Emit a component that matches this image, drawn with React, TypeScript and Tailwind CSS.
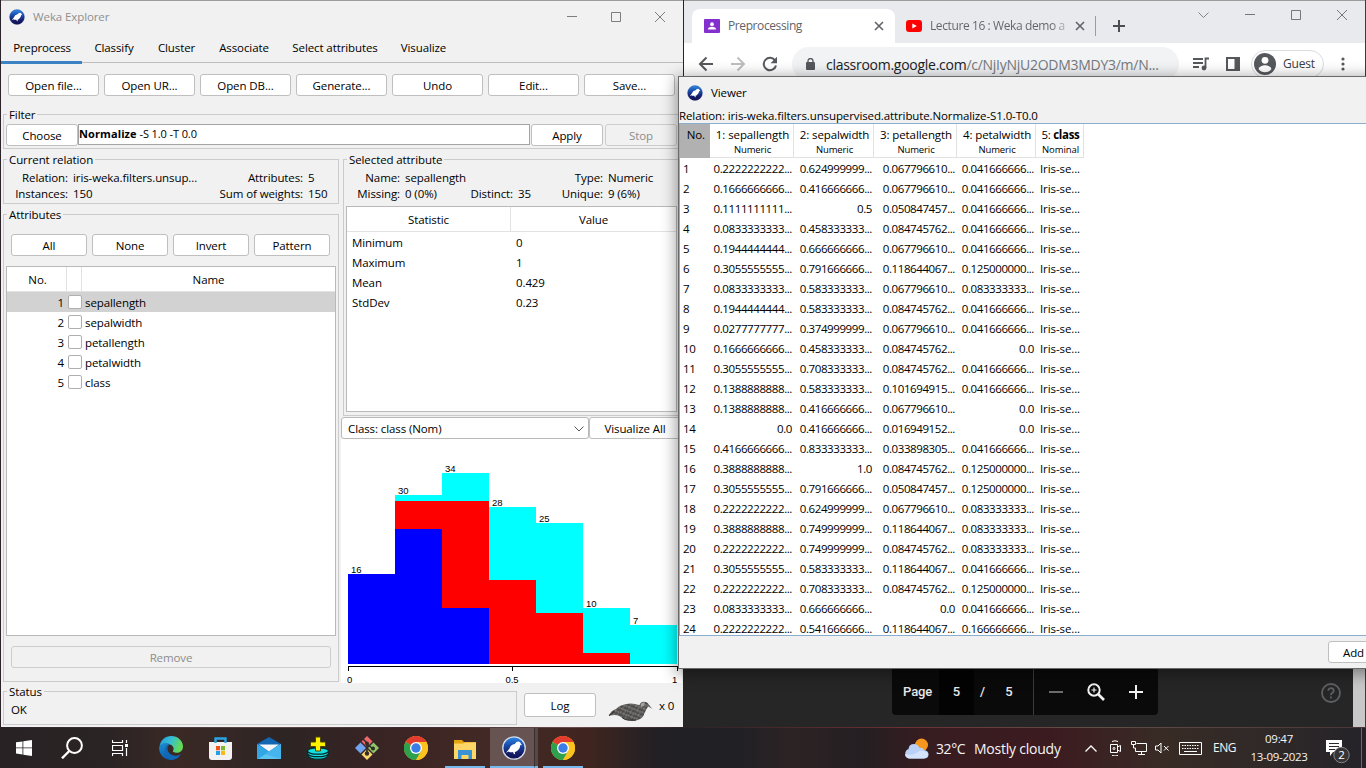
import React from "react";

const histogram = [
  { total: "16", x: 7, cyan: 135, red: 135, blue: 135 },
  { total: "30", x: 54, cyan: 56, red: 62, blue: 90 },
  { total: "34", x: 101, cyan: 34, red: 62, blue: 169 },
  { total: "28", x: 148, cyan: 68, red: 141, blue: 225 },
  { total: "25", x: 195, cyan: 84, red: 174, blue: 225 },
  { total: "10", x: 242, cyan: 169, red: 214, blue: 225 },
  { total: "7", x: 289, cyan: 186, red: 225, blue: 225 },
];

const rows: string[][] = [
  ["0.2222222222...", "0.624999999...", "0.067796610...", "0.041666666..."],
  ["0.1666666666...", "0.416666666...", "0.067796610...", "0.041666666..."],
  ["0.1111111111...", "0.5", "0.050847457...", "0.041666666..."],
  ["0.0833333333...", "0.458333333...", "0.084745762...", "0.041666666..."],
  ["0.1944444444...", "0.666666666...", "0.067796610...", "0.041666666..."],
  ["0.3055555555...", "0.791666666...", "0.118644067...", "0.125000000..."],
  ["0.0833333333...", "0.583333333...", "0.067796610...", "0.083333333..."],
  ["0.1944444444...", "0.583333333...", "0.084745762...", "0.041666666..."],
  ["0.0277777777...", "0.374999999...", "0.067796610...", "0.041666666..."],
  ["0.1666666666...", "0.458333333...", "0.084745762...", "0.0"],
  ["0.3055555555...", "0.708333333...", "0.084745762...", "0.041666666..."],
  ["0.1388888888...", "0.583333333...", "0.101694915...", "0.041666666..."],
  ["0.1388888888...", "0.416666666...", "0.067796610...", "0.0"],
  ["0.0", "0.416666666...", "0.016949152...", "0.0"],
  ["0.4166666666...", "0.833333333...", "0.033898305...", "0.041666666..."],
  ["0.3888888888...", "1.0", "0.084745762...", "0.125000000..."],
  ["0.3055555555...", "0.791666666...", "0.050847457...", "0.125000000..."],
  ["0.2222222222...", "0.624999999...", "0.067796610...", "0.083333333..."],
  ["0.3888888888...", "0.749999999...", "0.118644067...", "0.083333333..."],
  ["0.2222222222...", "0.749999999...", "0.084745762...", "0.083333333..."],
  ["0.3055555555...", "0.583333333...", "0.118644067...", "0.041666666..."],
  ["0.2222222222...", "0.708333333...", "0.084745762...", "0.125000000..."],
  ["0.0833333333...", "0.666666666...", "0.0", "0.041666666..."],
  ["0.2222222222...", "0.541666666...", "0.118644067...", "0.166666666..."],
];

const viewerGrid = "grid grid-cols-[30px_84px_80px_83px_79px_48px]";

function Button({ children, className = "", disabled = false }: { children: React.ReactNode; className?: string; disabled?: boolean }) {
  return (
    <button
      className={`flex h-[22px] shrink-0 items-center justify-center whitespace-nowrap rounded-[3px] border pt-px ${
        disabled ? "border-[#cdcdcd] bg-[#f1f1f1] text-[#8c8c8c]" : "border-[#bfbfbf] bg-white text-black"
      } ${className}`}
    >
      {children}
    </button>
  );
}

function Group({ title, className = "", children }: { title: string; className?: string; children: React.ReactNode }) {
  return (
    <section className={`relative border border-[#cbcbcb] ${className}`}>
      <h2 className="absolute left-[3px] top-[-8px] bg-[#f1f1f1] px-[2px] leading-4">{title}</h2>
      {children}
    </section>
  );
}

function WekaIcon({ size, ring }: { size: number; ring?: boolean }) {
  return (
    <svg width={size} height={size} viewBox="0 0 24 24" className="shrink-0">
      <defs>
        <linearGradient id="wekaBlue" x1="0" y1="0" x2="0" y2="1">
          <stop offset="0" stopColor="#2f8be8" />
          <stop offset="0.35" stopColor="#1b4fae" />
          <stop offset="0.75" stopColor="#141a66" />
          <stop offset="1" stopColor="#10104e" />
        </linearGradient>
      </defs>
      <circle cx="12" cy="12" r="11.2" fill="url(#wekaBlue)" stroke={ring ? "#d5dbea" : "#28438c"} strokeWidth={ring ? 1.3 : 0.5} />
      <path d="M4 16.800L7.500 12.400Q8.500 8.800 12.800 7.900 14.300 5.400 16.800 5.600 18.400 5.900 18.900 7.600L20 9.300 18.200 9.100Q18.300 13 14.600 15.200L12.700 16.200 13.200 18.200 11.800 18 11 16Q8.500 16.700 6.700 15.400z" fill="#fff" />
    </svg>
  );
}

function WindowControls({ color, wide, className = "" }: { color: string; wide?: boolean; className?: string }) {
  return (
    <svg width={wide ? 102 : 98} height="12" viewBox={wide ? "0 0 102 12" : "0 0 98 12"} fill="none" stroke={color} className={className}>
      {wide ? <path d="M0 5.500H10M46.500 1.500h9v9h-9zM92 1l10 10M102 1L92 11" /> : <path d="M0 5.500H10M44.500 1.500h9v9h-9zM88 1l10 10M98 1L88 11" />}
    </svg>
  );
}

function ChromeTabs() {
  return (
    <div className="flex h-[42px] items-end bg-[#e8eaed]">
      <div className="ml-2 flex h-[34px] w-[203px] items-center rounded-t-lg bg-white pl-3">
        <svg width="16" height="14" viewBox="0 0 16 14">
          <rect width="16" height="14" rx="1" fill="#8430ce" />
          <circle cx="8" cy="5.200" r="1.900" fill="#fff" />
          <path d="M4 10.500q0-2.700 4-2.700t4 2.700z" fill="#fff" />
        </svg>
        <span className="ml-2 w-[145px] text-[12px] tracking-[-0.4px] text-[#5f6368]">Preprocessing</span>
        <svg width="10" height="10" viewBox="0 0 10 10" stroke="#5f6368" strokeWidth="1.600" className="ml-px">
          <path d="M1 1l8 8M9 1L1 9" />
        </svg>
      </div>
      <div className="flex h-[34px] items-center pl-[11px]">
        <svg width="16" height="12" viewBox="0 0 16 12">
          <rect width="16" height="12" rx="3" fill="#f00" />
          <path d="M6.300 3.400v5.200L10.800 6z" fill="#fff" />
        </svg>
        <span className="ml-2 w-[138px] whitespace-nowrap bg-linear-to-r from-[#5f6368] from-88% to-[#5f636840] bg-clip-text text-[12px] tracking-[-0.4px] text-transparent">
          Lecture 16 : Weka demo a
        </span>
        <svg width="10" height="10" viewBox="0 0 10 10" stroke="#5f6368" strokeWidth="1.600" className="ml-[7px]">
          <path d="M1 1l8 8M9 1L1 9" />
        </svg>
        <div className="ml-[10px] h-5 w-px bg-[#9a9da1]" />
        <svg width="12" height="12" viewBox="0 0 12 12" stroke="#4a4d51" strokeWidth="2" className="ml-[17px]">
          <path d="M6 0v12M0 6h12" />
        </svg>
      </div>
      <div className="ml-auto mr-[18px] flex h-[42px] items-start gap-[36px] pt-[8px]">
        <svg width="11" height="12" viewBox="0 0 11 12" fill="none" stroke="#808285">
          <path d="M.5 3.500l5 5 5-5" />
        </svg>
        <WindowControls color="#76777a" wide />
      </div>
    </div>
  );
}

function ChromeToolbar() {
  return (
    <div className="flex h-[42px] items-center bg-white pl-[14px]">
      <svg width="16" height="16" viewBox="0 0 16 16" fill="none" stroke="#55585c" strokeWidth="2">
        <path d="M15 8H2M8.500 1.500L2 8l6.500 6.500" />
      </svg>
      <svg width="16" height="16" viewBox="0 0 16 16" fill="none" stroke="#bcbec0" strokeWidth="2" className="ml-4">
        <path d="M1 8h13M7.500 1.500L14 8l-6.500 6.500" />
      </svg>
      <svg width="16" height="16" viewBox="0 0 16 16" className="ml-4">
        <path d="M13.200 4.700A6.200 6.200 0 1 0 14 9.500" fill="none" stroke="#55585c" strokeWidth="2" />
        <path d="M15 .8v6.400H8.600z" fill="#55585c" />
      </svg>
      <div className="ml-[14px] flex h-[34px] w-[387px] items-center rounded-full bg-[#f1f3f4] pl-[14px]">
        <svg width="9" height="12" viewBox="0 0 9 12">
          <rect y="4" width="9" height="8" rx="1" fill="#55585c" />
          <path d="M2 5V3a2.500 2.500 0 0 1 5 0v2" fill="none" stroke="#55585c" strokeWidth="1.300" />
        </svg>
        <span className="ml-[11px] whitespace-nowrap text-[14px] tracking-[-0.27px] text-[#202124]">
          classroom.google.com<span className="text-[#75797e]">/c/NjIyNjU2ODM3MDY3/m/N...</span>
        </span>
      </div>
      <svg width="17" height="14" viewBox="0 0 17 14" className="ml-[14px]">
        <path d="M0 2h10M0 6h10M0 10h6" stroke="#55585c" strokeWidth="1.800" />
        <path d="M12.500 11V1.500H16" fill="none" stroke="#55585c" strokeWidth="1.800" />
        <circle cx="11" cy="11" r="2.400" fill="#55585c" />
      </svg>
      <svg width="14" height="14" viewBox="0 0 14 14" className="ml-4">
        <path d="M1 1h12v12H1z" fill="none" stroke="#55585c" strokeWidth="2" />
        <path d="M8.500 0H14v14H8.500z" fill="#55585c" />
      </svg>
      <div className="ml-[11px] flex h-[28px] w-[73px] items-center rounded-full border border-[#dadce0] pl-[2px]">
        <svg width="22" height="22" viewBox="0 0 22 22">
          <circle cx="11" cy="11" r="11" fill="#55585c" />
          <circle cx="11" cy="7.300" r="3.400" fill="#fff" />
          <path d="M4.500 16q1.700-3.700 6.500-3.700t6.500 3.700q-2.500 3.200-6.500 3.200T4.500 16z" fill="#fff" />
        </svg>
        <span className="ml-[7px] text-[12px] tracking-[-0.2px] text-[#3c4043]">Guest</span>
      </div>
      <svg width="4" height="14" viewBox="0 0 4 14" fill="#55585c" className="ml-[17px]">
        <circle cx="2" cy="2" r="1.600" />
        <circle cx="2" cy="7" r="1.600" />
        <circle cx="2" cy="12" r="1.600" />
      </svg>
    </div>
  );
}

function ChromeWindow() {
  return (
    <div className="absolute left-[684px] top-0 flex h-[727px] w-[681px] flex-col border-t border-[#9c9c9c] bg-[#262626]">
      <ChromeTabs />
      <ChromeToolbar />
      <div className="mt-auto flex h-[60px]">
        <div className="flex flex-1 items-start pl-[208px] pt-[2px]">
          <div className="flex h-[46px] w-[266px] items-center rounded-b bg-[#0a0a0a] font-[Roboto,sans-serif] text-[13px] font-medium text-[#e8e8e8]">
            <span className="w-[47px] pl-[11px]">Page</span>
            <span className="flex h-full w-[35px] items-center justify-center bg-[#030303]">5</span>
            <span className="w-[17px] text-center">/</span>
            <span className="w-[36px] text-center">5</span>
            <span className="ml-[6px] h-full w-px bg-[#3a3a3a]" />
            <span className="ml-[15px] h-[2px] w-[14px] bg-[#6c6c6c]" />
            <svg width="18" height="18" viewBox="0 0 18 18" fill="none" stroke="#f1f1f1" strokeWidth="2" className="ml-[24px]">
              <circle cx="7" cy="7" r="5.700" />
              <path d="M11 11l6 6" strokeWidth="2.600" />
              <path d="M7 4.500v5M4.500 7h5" strokeWidth="1.200" />
            </svg>
            <svg width="14" height="14" viewBox="0 0 14 14" stroke="#f1f1f1" strokeWidth="2" className="ml-[24px]">
              <path d="M7 0v14M0 7h14" />
            </svg>
          </div>
          <svg width="20" height="20" viewBox="0 0 20 20" fill="none" stroke="#5d5f62" strokeWidth="1.800" className="ml-auto mr-[12px] mt-[14px]">
            <circle cx="10" cy="10" r="9" />
            <path d="M7.300 7.800q0-2.600 2.700-2.600t2.700 2.500q0 1.300-1.500 2.200T10 12.200M10 13.500v2" />
          </svg>
        </div>
        <div className="w-3 bg-[#c8c8c8]" />
      </div>
    </div>
  );
}

function Info({ label, value, labelWidth }: { label: string; value: string; labelWidth: string }) {
  return (
    <div className="flex whitespace-nowrap">
      <span className={`${labelWidth} text-right`}>{label}</span>
      <span className="ml-[5px]">{value}</span>
    </div>
  );
}

function AttributesPanel() {
  return (
    <Group title="Attributes" className="mt-[10px] h-[468px] w-[336px] px-[2px] pt-[19px]">
      <div className="flex gap-[5px] pl-[5px]">
        {["All", "None", "Invert", "Pattern"].map((name) => (
          <Button key={name} className="w-[76px]">{name}</Button>
        ))}
      </div>
      <div className="mt-[10px] flex h-[370px] flex-col border border-[#b9b9b9] bg-white">
        <div className="flex h-[25px] border-b border-[#e2e2e2] text-center leading-[25px]">
          <span className="w-[60px] border-r border-[#e2e2e2] pl-[2px]">No.</span>
          <span className="w-[15px] border-r border-[#e2e2e2]" />
          <span className="flex-1">Name</span>
        </div>
        {["sepallength", "sepalwidth", "petallength", "petalwidth", "class"].map((name, i) => (
          <div key={name} className={`flex h-5 items-center ${i === 0 ? "bg-[#d2d2d2]" : ""}`}>
            <span className="w-[57px] pt-[2px] text-right">{i + 1}</span>
            <span className="ml-[4px] size-[14px] rounded-[2px] border border-[#b0b0b0] bg-white" />
            <span className="ml-[3px] pt-[2px]">{name}</span>
          </div>
        ))}
      </div>
      <Button disabled className="ml-[5px] mt-[10px] w-[320px]">Remove</Button>
    </Group>
  );
}

function Histogram() {
  return (
    <svg width="341" height="244" viewBox="0 0 341 244" className="bg-white" shapeRendering="crispEdges">
      {histogram.map((bar) => (
        <g key={bar.x}>
          <rect x={bar.x} y={bar.cyan} width="47" height={225 - bar.cyan} fill="#0ff" />
          <rect x={bar.x} y={bar.red} width="47" height={225 - bar.red} fill="#f00" />
          <rect x={bar.x} y={bar.blue} width="47" height={225 - bar.blue} fill="#00f" />
          <text x={bar.x + 3} y={bar.cyan - 1} fontSize="9.500" fontFamily="Liberation Sans, sans-serif">{bar.total}</text>
        </g>
      ))}
      <path d="M7.500 232v-4.500h329v4.500M171.500 227.500v4.500" fill="none" stroke="#000" />
      <g fontSize="9.500" fontFamily="Liberation Sans, sans-serif">
        <text x="6" y="244">0</text>
        <text x="164.500" y="244">0.5</text>
        <text x="331" y="244">1</text>
      </g>
    </svg>
  );
}

function SelectedAttribute() {
  return (
    <Group title="Selected attribute" className="ml-[2px] h-[257px] w-[337px] px-[2px] pt-[10px]">
      <div className="flex h-[36px] leading-4">
        <div>
          <Info label="Name:" value="sepallength" labelWidth="w-[54px]" />
          <Info label="Missing:" value="0 (0%)" labelWidth="w-[54px]" />
        </div>
        <div className="pt-4">
          <Info label="Distinct:" value="35" labelWidth="w-[47px]" />
        </div>
        <div className="ml-[24px]">
          <Info label="Type:" value="Numeric" labelWidth="w-[48px]" />
          <Info label="Unique:" value="9 (6%)" labelWidth="w-[48px]" />
        </div>
      </div>
      <div className="h-[206px] border border-[#b9b9b9] bg-white">
        <div className="flex h-[25px] border-b border-[#e2e2e2] text-center leading-[25px]">
          <span className="w-[164px] border-r border-[#e2e2e2]">Statistic</span>
          <span className="flex-1">Value</span>
        </div>
        {[["Minimum", "0"], ["Maximum", "1"], ["Mean", "0.429"], ["StdDev", "0.23"]].map(([name, value]) => (
          <div key={name} className="flex h-5 items-center pl-[5px] pt-[2px]">
            <span className="w-[164px]">{name}</span>
            <span>{value}</span>
          </div>
        ))}
      </div>
    </Group>
  );
}

function WekaBird() {
  return (
    <svg width="45" height="21" viewBox="0 0 45 21">
      <defs>
        <pattern id="feathers" width="7" height="5" patternUnits="userSpaceOnUse" patternTransform="rotate(-14)">
          <rect width="7" height="5" fill="#62605e" />
          <path d="M0 1h2M4 4h2M2 2h2" stroke="#353332" />
          <path d="M4 1h2M0 3h1M2 4h1" stroke="#8f8c89" />
        </pattern>
      </defs>
      <path d="M1 14.500Q3 9.500 8 8q4-4.500 12-5.300 6-.7 11.500 1.600Q32 .8 36 .8q3.500 0 4.500 2.500l3.800 4.500-4.200-2.300q-2.300 3.500-3.600 6.700-1.500 5.500-7.500 7-12 2-15.500-3-3.500-2.200-7-2.200z" fill="url(#feathers)" />
      <path d="M32.500 3.500Q34 1 37 1.500l-1 3.500-3 1z" fill="#a5a29f" />
      <path d="M1 14.500q3-1.500 5-4M14 16q3 4 14 3" fill="none" stroke="#343231" strokeWidth="1.200" />
    </svg>
  );
}

function WekaWindow() {
  return (
    <div className="absolute left-px top-0 flex h-[727px] w-[682px] flex-col overflow-hidden border-t border-[#9c9c9c] bg-[#f1f1f1]">
      <header className="flex h-[31px] shrink-0 items-center pl-[8px]">
        <WekaIcon size={16} />
        <h1 className="ml-[8px] text-[#8f8f8f]">Weka Explorer</h1>
        <WindowControls color="#7d7d7d" className="ml-auto mr-[18px]" />
      </header>
      <nav className="flex h-8 shrink-0 text-center leading-[31px]">
        <span className="w-[81px] border-b-[3px] border-[#3c83c5] pl-px tracking-[-0.2px]">Preprocess</span>
        {[["Classify", "w-[64px]"], ["Cluster", "w-[61px]"], ["Associate", "w-[74px]"], ["Select attributes", "w-[108px]"], ["Visualize", "w-[69px]"]].map(([name, width]) => (
          <span key={name} className={`mb-px whitespace-nowrap border-b border-[#bdbdbd] ${width}`}>{name}</span>
        ))}
        <span className="mb-px flex-1 border-b border-[#bdbdbd]" />
      </nav>
      <div className="mt-[10px] flex shrink-0 gap-[5px] pl-[7px]">
        {["Open file...", "Open UR...", "Open DB...", "Generate...", "Undo", "Edit...", "Save..."].map((name) => (
          <Button key={name} className="w-[91px]">{name}</Button>
        ))}
      </div>
      <Group title="Filter" className="ml-[2px] mt-[18px] h-[35px] w-[677px] shrink-0 pl-[2px] pt-[9px]">
        <div className="flex">
          <Button className="w-[72px]">Choose</Button>
          <div className="h-[21px] w-[452px] whitespace-nowrap border border-[#a3a3a3] bg-white text-[11px] leading-[18px] tracking-[-0.1px]">
            <b className="tracking-[0.1px]">Normalize</b> -S 1.0 -T 0.0
          </div>
          <Button className="ml-px w-[72px]">Apply</Button>
          <Button disabled className="ml-[2px] w-[72px]">Stop</Button>
        </div>
      </Group>
      <div className="mt-[10px] flex shrink-0 pl-[2px]">
        <div className="w-[338px]">
          <Group title="Current relation" className="flex h-[45px] w-[336px] pt-[10px] leading-4">
            <div>
              <Info label="Relation:" value="iris-weka.filters.unsup..." labelWidth="w-[64px]" />
              <Info label="Instances:" value="150" labelWidth="w-[64px]" />
            </div>
            <div className="ml-auto w-[125px]">
              <Info label="Attributes:" value="5" labelWidth="w-[90px]" />
              <Info label="Sum of weights:" value="150" labelWidth="w-[90px]" />
            </div>
          </Group>
          <AttributesPanel />
        </div>
        <div className="w-[341px]">
          <SelectedAttribute />
          <div className="mt-px flex">
            <div className="flex h-[22px] w-[248px] items-center justify-between rounded-[3px] border border-[#b9b9b9] bg-white pl-[6px] pr-[4px] pt-px">
              Class: class (Nom)
              <svg width="10" height="6" viewBox="0 0 10 6" fill="none" stroke="#555">
                <path d="M.5.500L5 5 9.500.500" />
              </svg>
            </div>
            <Button className="w-[92px]">Visualize All</Button>
          </div>
          <Histogram />
        </div>
      </div>
      <footer className="mb-[2px] mt-auto flex shrink-0 pl-[2px]">
        <Group title="Status" className="h-[34px] w-[514px] pl-[7px] pt-[10px] leading-4">OK</Group>
        <Button className="ml-[7px] mt-[2px] h-[24px] w-[72px]">Log</Button>
        <div className="ml-[12px] mt-[10px]"><WekaBird /></div>
        <span className="ml-[6px] mt-[6px]">x 0</span>
      </footer>
    </div>
  );
}

function ViewerWindow() {
  return (
    <div className="absolute left-[678px] top-[76px] flex h-[593px] w-[700px] flex-col border border-[#6a6a6a] bg-[#f1f1f1] shadow-[0_3px_14px_2px_rgba(0,0,0,0.38)]">
      <header className="flex h-[30px] items-center pl-[8px] pt-px">
        <WekaIcon size={16} />
        <h1 className="ml-[8px]">Viewer</h1>
      </header>
      <p className="h-[16px] whitespace-nowrap leading-[17px] tracking-[-0.11px]">Relation: iris-weka.filters.unsupervised.attribute.Normalize-S1.0-T0.0</p>
      <div className="h-[513px] overflow-hidden border-y border-l border-[#8aaed0] bg-white">
        <div className={`${viewerGrid} h-[34px] text-center leading-[15px]`}>
          <div className="bg-[#b1b1b1] pr-[5px] pt-[3px] text-right">No.</div>
          {["1: sepallength", "2: sepalwidth", "3: petallength", "4: petalwidth"].map((name) => (
            <div key={name} className="whitespace-nowrap border-b border-r border-[#e2e2e2] pl-[2px] pt-[3px]">
              {name}
              <div className="text-[9.500px] leading-[15px]">Numeric</div>
            </div>
          ))}
          <div className="border-b border-r border-[#e2e2e2] pl-[2px] pt-[3px] tracking-[-0.3px]">
            5: <b>class</b>
            <div className="text-[9.500px] leading-[15px] tracking-[-0.1px]">Nominal</div>
          </div>
        </div>
        <div className="pt-px">
          {rows.map((cells, i) => (
            <div key={i} className={`${viewerGrid} h-5 items-center text-right tracking-[-0.4px]`}>
              <span className="pl-[3px] text-left">{i + 1}</span>
              {cells.map((cell, c) => (
                <span key={c} className="pr-[2px]">{cell}</span>
              ))}
              <span className="whitespace-nowrap pr-[4px] tracking-[-0.1px]">Iris-se...</span>
            </div>
          ))}
        </div>
      </div>
      <Button className="ml-[649px] mt-[5px] w-[50px] justify-start pl-[14px]">Add</Button>
    </div>
  );
}

function ChromeLogo() {
  return (
    <svg width="24" height="24" viewBox="0 0 24 24">
      <circle cx="12" cy="12" r="12" fill="#fcc31e" />
      <path d="M12 12L1.600 6A12 12 0 0 1 22.400 6z" fill="#e33b2e" />
      <path d="M1.600 6A12 12 0 0 0 12 24l5.200-9z" fill="#2da14d" />
      <path d="M12 6h10.400A12 12 0 0 1 12 24l5.200-9z" fill="#fcc31e" />
      <circle cx="12" cy="12" r="6" fill="#fff" />
      <circle cx="12" cy="12" r="4.700" fill="#3a7de8" />
    </svg>
  );
}

function TaskSlot({ children, className = "w-[49px]" }: { children: React.ReactNode; className?: string }) {
  return <div className={`flex h-10 shrink-0 items-center justify-center ${className}`}>{children}</div>;
}

function Taskbar() {
  return (
    <div className="absolute left-0 top-[728px] flex h-10 w-[1366px] items-center bg-[linear-gradient(90deg,#282225_0%,#2b2424_8%,#3a2925_13%,#2d2424_21%,#3b2424_29%,#432a25_37%,#40251f_43%,#222025_48%,#202025_54%,#2d2325_58%,#241f22_63%,#371c20_68%,#3c1b20_77%,#382b25_85%,#2f2928_93%,#252329_100%)] text-[#f5f5f5]">
      <TaskSlot className="w-[48px]">
        <svg width="16" height="16" viewBox="0 0 16 16" fill="#fff">
          <path d="M0 2.300l6.500-.9v6.100H0zM7.300 1.300L16 0v7.500H7.300zM0 8.300h6.500v6.200L0 13.600zM7.300 8.300H16V16l-8.700-1.300z" />
        </svg>
      </TaskSlot>
      <TaskSlot className="w-[48px]">
        <svg width="22" height="22" viewBox="0 0 22 22" fill="none" stroke="#fff" strokeWidth="2">
          <circle cx="13.500" cy="8.500" r="7.400" />
          <path d="M8.300 14L1 21.300" strokeWidth="2.400" />
        </svg>
      </TaskSlot>
      <TaskSlot className="w-[48px]">
        <svg width="17" height="16" viewBox="0 0 17 16" fill="none" stroke="#fff">
          <path d="M.5 0v2.500h10V0M.5 16v-2.500h10V16M.5 5.500h10v5H.5zM14.500 0v3M14.500 8v8" strokeWidth="1.200" />
          <rect x="13" y="4" width="3" height="3" fill="#fff" stroke="none" />
        </svg>
      </TaskSlot>
      <TaskSlot className="w-[54px]">
        <svg width="24" height="24" viewBox="0 0 24 24">
          <defs>
            <linearGradient id="edgeTop" x1="0" y1="0" x2="1" y2="0.300">
              <stop offset="0" stopColor="#2795dc" />
              <stop offset="0.500" stopColor="#35bdd5" />
              <stop offset="1" stopColor="#65da55" />
            </linearGradient>
            <linearGradient id="edgeLow" x1="0" y1="0" x2="0.600" y2="1">
              <stop offset="0" stopColor="#1b8ed6" />
              <stop offset="1" stopColor="#0b55a5" />
            </linearGradient>
          </defs>
          <path d="M.5 10.500C1.500 4 6.500 0 12 0c7 0 12 5 12 10.500 0 4-3 6.300-6.300 6.300-3 0-4.300-1.200-3.700-2 1.200-1.500.8-5-3-6.300C7 7 2 8 .5 10.500z" fill="url(#edgeTop)" />
          <path d="M.2 11C2 7 7.500 6 11 8.300c-2.500 0-4.300 2.300-4.300 5 0 5 5 8.700 11 6.700l4-1.700C19.500 22 16 24 12 24 5 24-.5 18 .2 11z" fill="url(#edgeLow)" />
          <path d="M11 8.300C8 10 8 13.500 9.500 16c2.500 4 8 5 12.200 2.300C19.500 22 16 24 12 24 8 22 5.500 18.500 6 14c.3-3 2.500-5.500 5-5.700z" fill="#1268b8" />
        </svg>
      </TaskSlot>
      <TaskSlot className="w-[44px]">
        <svg width="23" height="23" viewBox="0 0 23 23">
          <path d="M0 5h23v15q0 3-3 3H3q-3 0-3-3z" fill="#f2f2f2" />
          <path d="M6.500 6V1.500h10V6" fill="none" stroke="#2aa5e4" strokeWidth="2.400" />
          <path d="M7 9h4v4.300H7z" fill="#f1511b" />
          <path d="M12 9h4v4.300h-4z" fill="#80b72b" />
          <path d="M7 14h4v4H7z" fill="#20a1e4" />
          <path d="M12 14h4v4h-4z" fill="#fab916" />
        </svg>
      </TaskSlot>
      <TaskSlot className="w-[54px]">
        <svg width="24" height="22" viewBox="0 0 24 22">
          <path d="M0 7L12 0l12 7v15H0z" fill="#1266b4" />
          <path d="M0 7l12 7.500L24 7v15H0z" fill="#31a5e6" />
          <path d="M2 7.500h20L12 14.500z" fill="#f4f8fa" />
          <path d="M24 7v15H1z" fill="#5bc4f3" />
          <path d="M24 7L12 14.500 8.500 17.300 24 22z" fill="#46b5ee" />
        </svg>
      </TaskSlot>
      <TaskSlot className="w-[44px]">
        <svg width="24" height="24" viewBox="0 0 24 24">
          <g fill="#16dfe2" stroke="#062c2e" strokeWidth="1.300">
            <ellipse cx="12" cy="20" rx="9.500" ry="3.200" />
            <ellipse cx="12" cy="17.500" rx="10.500" ry="3.200" />
            <ellipse cx="12" cy="15" rx="10.500" ry="3.200" />
          </g>
          <path d="M9.500 1h5v5h5v4.500h-5V15h-5v-4.500h-5V6h5z" fill="#fff100" stroke="#4b4700" />
        </svg>
      </TaskSlot>
      <TaskSlot className="w-[54px]">
        <svg width="26" height="26" viewBox="0 0 26 26">
          <path d="M13 1l5.500 5.500L13 12 7.500 6.500z" fill="#f0696a" />
          <path d="M19.500 7.500L25 13l-5.500 5.500L14 13z" fill="#8dc768" />
          <path d="M6.500 7.500L12 13l-5.500 5.500L1 13z" fill="#72a5ef" />
          <path d="M13 14l5.500 5.500L13 25l-5.500-5.500z" fill="#f8d86a" />
          <path d="M8 3l5 5v11M13 9l6 5" fill="none" stroke="#332b2a" strokeWidth="1.600" />
          <g fill="#332b2a">
            <circle cx="13" cy="8.500" r="2" />
            <circle cx="13" cy="18.500" r="2.200" />
            <circle cx="19" cy="13.500" r="2" />
          </g>
        </svg>
      </TaskSlot>
      <TaskSlot className="w-[44px]"><ChromeLogo /></TaskSlot>
      <TaskSlot className="ml-[7px] w-[40px] border-b-2 border-[#76b9ed]">
        <svg width="22" height="19" viewBox="0 0 22 19" className="mt-[4px]">
          <path d="M0 2V0h8l2 2h12v17H0z" fill="#e5a50e" />
          <path d="M0 3.500h9l2-1h11V19H0z" fill="#fcd666" />
          <path d="M4 19v-9h14v9h-3.500v-4h-7v4z" fill="#3a92d6" />
        </svg>
      </TaskSlot>
      <TaskSlot className="ml-[5px] w-[44px] border-b-2 border-[#76b9ed] bg-[#675351] pl-[4px] pt-[2px]"><WekaIcon size={24} ring /></TaskSlot>
      <div className="h-10 w-[4px] border-b-2 border-l border-[#76b9ed] border-l-[#383033] bg-[#574745]" />
      <TaskSlot className="ml-[5px] w-[40px] border-b-2 border-[#76b9ed] pt-[2px]"><ChromeLogo /></TaskSlot>

      <div className="ml-auto flex h-10 items-center">
        <svg width="25" height="21" viewBox="0 0 25 21">
          <circle cx="17.500" cy="7" r="6.500" fill="#f6961e" />
          <path d="M5 20.500a5 5 0 0 1-.5-9.500Q5 6 10 6q4 0 5.500 4 3-1 4.500 2 4.500.5 4.500 4.500 0 4-4.500 4z" fill="#b9d0f7" />
          <path d="M5 20.500q-4-1-4-4.500 8 2 12-1.500t11 .5q1 4-4 5.500z" fill="#d4e2fb" />
        </svg>
        <span className="ml-[7px] w-[38px] whitespace-nowrap text-[14px] tracking-[-0.4px]">32°C</span>
        <span className="w-[111px] whitespace-nowrap text-[14px] tracking-[-0.23px]">Mostly cloudy</span>
        <svg width="12" height="7" viewBox="0 0 12 7" fill="none" stroke="#fff" strokeWidth="1.300">
          <path d="M.5 6.500L6 1l5.500 5.500" />
        </svg>
        <svg width="13" height="16" viewBox="0 0 13 16" fill="none" stroke="#fff" className="ml-[12px]">
          <path d="M1.500 4.500h7v8h-7zM8.500 7l3-1.500v6l-3-1.500M3 1.500Q6 0 9 1.500M3 15.500q3 1 6 0" />
          <circle cx="5" cy="8.500" r="1" />
        </svg>
        <svg width="16" height="14" viewBox="0 0 16 14" fill="none" stroke="#fff" className="ml-[9px]">
          <path d="M5.500 2.500h10v8h-11V7M10.500 10.500v3M7 13.500h7M.5.500h4v3h-4zM2.500 3.500v3.500h2" />
        </svg>
        <svg width="15" height="12" viewBox="0 0 15 12" fill="none" stroke="#fff" className="ml-[8px]">
          <path d="M.5 4h2.500l3-3v10L3 8H.5zM9 4l4.500 4.500M13.500 4L9 8.500" />
        </svg>
        <svg width="23" height="13" viewBox="0 0 23 13" fill="none" stroke="#fff" className="ml-[9px]">
          <path d="M.5.500h22v12H.5z" />
          <path d="M3 3.500h17M3 6.500h17" strokeDasharray="1.500 1" />
          <path d="M5 9.500h13" />
        </svg>
        <span className="ml-[11px] w-[25px] text-[12px] tracking-[-0.5px]">ENG</span>
        <div className="ml-[9px] w-[64px] whitespace-nowrap text-center text-[11.500px] leading-[18px] tracking-[-0.3px]">
          <div>09:47</div>
          <div>13-09-2023</div>
        </div>
        <svg width="25" height="26" viewBox="0 0 25 26" className="ml-[14px] mt-[7px]">
          <path d="M1 1h16v12H8l-3 4v-4H1z" fill="#fff" />
          <path d="M4 4.500h10M4 7.500h10M4 10.500h6" stroke="#2b292c" />
          <circle cx="16.500" cy="16" r="7.700" fill="#373436" stroke="#868486" />
          <text x="16.500" y="20" fill="#fff" fontSize="11.500" textAnchor="middle">2</text>
        </svg>
        <div className="ml-[11px] h-10 w-px bg-[#6a686a]" />
        <div className="w-[4px]" />
      </div>
    </div>
  );
}

export default function App() {
  return (
    <div className="relative h-[768px] w-[1366px] select-none overflow-hidden bg-[linear-gradient(90deg,#2a232a_0%,#5c4848_20%,#3a2a2e_30%,#6b4d50_42%,#2a2226_50%,#6d3035_66%,#5f5048_80%,#4c3438_100%)] font-['Open_Sans','Noto_Sans',sans-serif] text-[11.500px] tracking-[-0.1px] text-black">
      <ChromeWindow />
      <WekaWindow />
      <ViewerWindow />
      <Taskbar />
    </div>
  );
}
